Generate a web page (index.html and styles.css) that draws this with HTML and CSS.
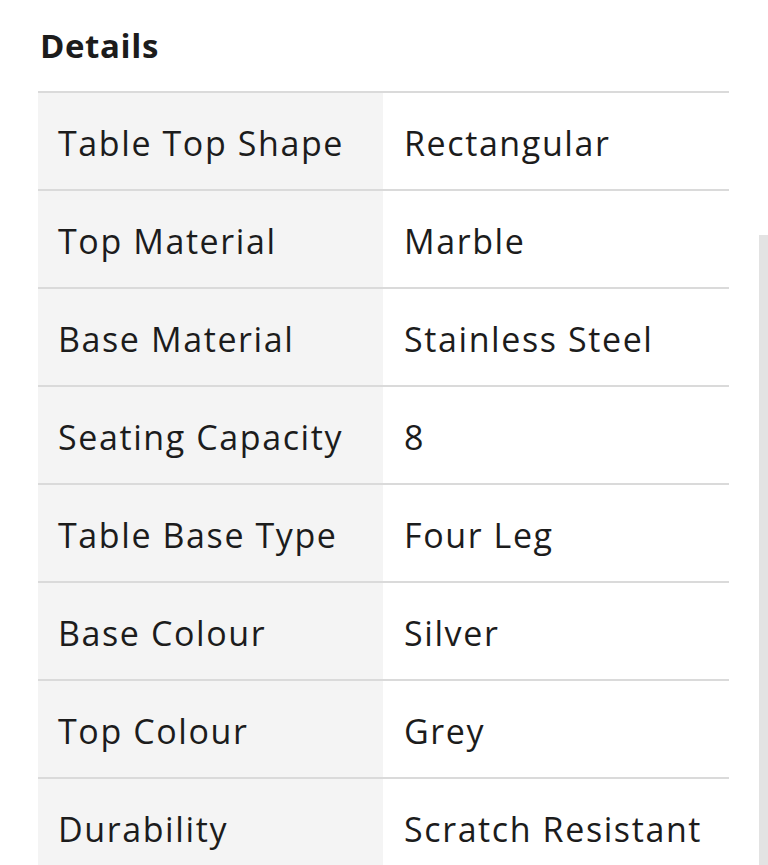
FILE: index.html
```html
<!DOCTYPE html>
<html lang="en">
<head>
<meta charset="utf-8">
<title>Details</title>
<link rel="stylesheet" href="styles.css">
</head>
<body>
<div class="page">
  <h2 class="title">Details</h2>
  <table class="specs">
    <tbody>
      <tr><th>Table Top Shape</th><td>Rectangular</td></tr>
      <tr><th>Top Material</th><td>Marble</td></tr>
      <tr><th>Base Material</th><td>Stainless Steel</td></tr>
      <tr><th>Seating Capacity</th><td>8</td></tr>
      <tr><th>Table Base Type</th><td>Four Leg</td></tr>
      <tr><th>Base Colour</th><td>Silver</td></tr>
      <tr><th>Top Colour</th><td>Grey</td></tr>
      <tr><th>Durability</th><td>Scratch Resistant</td></tr>
    </tbody>
  </table>
</div>
<div class="scrollbar"></div>
</body>
</html>
```
FILE: styles.css
```css
html, body {
  margin: 0;
  padding: 0;
  background: #ffffff;
  overflow: hidden;
}
body {
  font-family: "Open Sans", Lato, sans-serif;
  color: #1c1c1c;
}
.page {
  padding: 0 39px 0 38px;
}
.title {
  margin: 0;
  padding: 26px 0 0 2px;
  height: 91px;
  box-sizing: border-box;
  font-size: 33px;
  line-height: 40px;
  font-weight: 700;
  letter-spacing: 0.6px;
}
.specs {
  width: 691px;
  border-collapse: collapse;
  table-layout: fixed;
}
.specs tr {
  border-top: 2px solid #dadada;
}
.specs th,
.specs td {
  height: 98px;
  padding: 3px 0 0 20px;
  font-size: 34px;
  font-weight: 400;
  letter-spacing: 1.6px;
  text-align: left;
  vertical-align: middle;
  white-space: nowrap;
  box-sizing: border-box;
}
.specs th {
  width: 345px;
  background: #f4f4f4;
}
.specs td {
  padding-left: 21px;
  background: #ffffff;
}
.scrollbar {
  position: absolute;
  left: 759px;
  top: 235px;
  width: 9px;
  height: 630px;
  background: #e3e3e3;
}
```
